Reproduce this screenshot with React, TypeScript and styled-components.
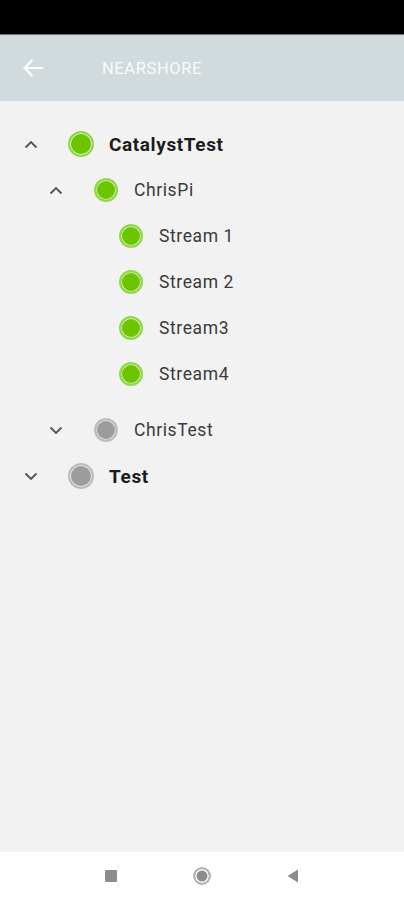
import { createGlobalStyle, styled } from "styled-components";

const GlobalStyle = createGlobalStyle`
    html, body {
        margin: 0;
        padding: 0;
        background: #f2f2f2;
        font-family: Roboto, "Noto Sans", sans-serif;
    }
`;

const Screen = styled.div`
    width: 404px;
    height: 900px;
    display: flex;
    flex-direction: column;
    background: #f2f2f2;
    overflow: hidden;
`;

const StatusBar = styled.div`
    height: 35px;
    background: #000;
    border-bottom: 1px solid #6b6b6b;
    box-sizing: border-box;
`;

const Header = styled.div`
    height: 66px;
    background: #d1dadd;
    display: flex;
    align-items: center;
`;

const BackButton = styled.div`
    width: 68px;
    height: 100%;
    display: flex;
    align-items: center;
    padding-left: 22px;
    box-sizing: border-box;
`;

const Title = styled.span`
    margin-left: 34px;
    color: rgba(255, 255, 255, 0.9);
    font-size: 16.5px;
    letter-spacing: 0.6px;
`;

const Tree = styled.div`
    flex: 1;
    padding-top: 20px;
    display: flex;
    flex-direction: column;
`;

const Group = styled.div<{ $gapAfter?: number }>`
    display: flex;
    flex-direction: column;
    margin-bottom: ${(p) => p.$gapAfter ?? 0}px;
`;

const Row = styled.div<{ $level: number }>`
    height: 46px;
    display: flex;
    align-items: center;
    padding-left: ${(p) => 19 + p.$level * 25}px;
`;

const ChevronSlot = styled.div`
    width: 24px;
    display: flex;
    justify-content: center;
    align-items: center;
`;

const DotSlot = styled.div`
    width: 26px;
    margin-left: 25px;
    display: flex;
    justify-content: center;
    align-items: center;
`;

const Dot = styled.div<{ $active: boolean; $size: number }>`
    width: ${(p) => p.$size}px;
    height: ${(p) => p.$size}px;
    border-radius: 50%;
    box-sizing: border-box;
    background: ${(p) => (p.$active ? "#6cc500" : "#9c9c9c")};
    border: 2px solid ${(p) => (p.$active ? "#93d84d" : "#bdbdbd")};
    box-shadow: inset 0 0 0 1px ${(p) => (p.$active ? "#d7f0bd" : "#e6e6e6")};
`;

const Label = styled.span<{ $bold?: boolean }>`
    margin-left: 15px;
    font-size: ${(p) => (p.$bold ? 19 : 17.5)}px;
    font-weight: ${(p) => (p.$bold ? 700 : 400)};
    color: ${(p) => (p.$bold ? "#1c1c1c" : "#3a3a3a")};
    letter-spacing: 0.6px;
`;

const NavBar = styled.div`
    height: 48px;
    background: #fff;
    display: flex;
    align-items: center;
    gap: 76px;
    padding-left: 105px;
`;

const NavSquare = styled.div`
    width: 12px;
    height: 12px;
    background: #8c8c8c;
    border-radius: 1px;
`;

const NavCircle = styled.div`
    width: 18px;
    height: 18px;
    border-radius: 50%;
    box-sizing: border-box;
    border: 2px solid #b5b5b5;
    background: #8c8c8c;
    box-shadow: inset 0 0 0 1.5px #fff;
`;

function Chevron({ up }: { up: boolean }) {
    return (
        <svg width="14" height="9" viewBox="0 0 14 9">
            <path
                d={up ? "M1.5 7.5 L7 2 L12.5 7.5" : "M1.5 1.5 L7 7 L12.5 1.5"}
                fill="none"
                stroke="#555"
                strokeWidth="1.9"
            />
        </svg>
    );
}

type Node = { label: string; level: number; active: boolean; chevron?: "up" | "down" };

function TreeRow({ label, level, active, chevron }: Node) {
    const size = level === 0 ? 26 : 24;
    return (
        <Row $level={level}>
            <ChevronSlot>{chevron ? <Chevron up={chevron === "up"} /> : null}</ChevronSlot>
            <DotSlot>
                <Dot $active={active} $size={size} />
            </DotSlot>
            <Label $bold={level === 0}>{label}</Label>
        </Row>
    );
}

export default function App() {
    const streams = ["Stream 1", "Stream 2", "Stream3", "Stream4"];
    return (
        <Screen>
            <GlobalStyle />
            <StatusBar />
            <Header>
                <BackButton>
                    <svg width="22" height="20" viewBox="0 0 22 20">
                        <path d="M21 10 H3 M10.5 2 L2.5 10 L10.5 18" fill="none" stroke="#fff" strokeWidth="2.2" />
                    </svg>
                </BackButton>
                <Title>NEARSHORE</Title>
            </Header>
            <Tree>
                <Group $gapAfter={10}>
                    <TreeRow label="CatalystTest" level={0} active chevron="up" />
                    <TreeRow label="ChrisPi" level={1} active chevron="up" />
                    {streams.map((s) => (
                        <TreeRow key={s} label={s} level={2} active />
                    ))}
                </Group>
                <TreeRow label="ChrisTest" level={1} active={false} chevron="down" />
                <TreeRow label="Test" level={0} active={false} chevron="down" />
            </Tree>
            <NavBar>
                <NavSquare />
                <NavCircle />
                <svg width="12" height="14" viewBox="0 0 12 14">
                    <path d="M11 0.5 V13.5 L0.5 7 Z" fill="#8c8c8c" />
                </svg>
            </NavBar>
        </Screen>
    );
}
